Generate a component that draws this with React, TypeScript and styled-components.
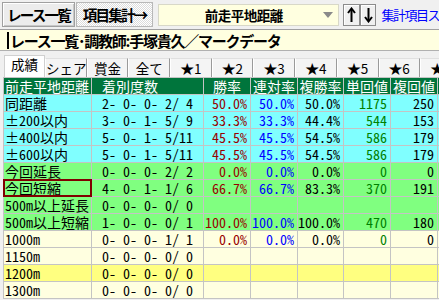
import React from "react";
import styled, { createGlobalStyle, css } from "styled-components";

const GlobalStyle = createGlobalStyle`
  html, body { margin: 0; padding: 0; background: #f0f0f0; overflow: hidden; }
  body { font-family: "Noto Sans CJK JP", "Noto Sans", sans-serif; }
`;

const Window = styled.div`
  width: 439px;
  height: 300px;
  overflow: hidden;
  display: flex;
  flex-direction: column;
  background: #f0f0f0;
`;

const Toolbar = styled.div`
  display: flex;
  align-items: center;
  height: 29px;
  padding-left: 2px;
  box-sizing: border-box;
  white-space: nowrap;
  flex-shrink: 0;
`;

const NavButton = styled.div<{ $w: number; $pressed?: boolean }>`
  width: ${(p) => p.$w}px;
  height: 25px;
  box-sizing: border-box;
  border: 1px solid #a0a0a0;
  margin-right: 1px;
  display: flex;
  align-items: center;
  justify-content: center;
  font-weight: 700;
  font-size: 14.5px;
  letter-spacing: -1.8px;
  color: #000;
  ${(p) =>
    p.$pressed
      ? css`
          background: repeating-conic-gradient(#ffffff 0 25%, #dcdcdc 0 50%) 0 0 / 2px 2px;
          border-color: #b8b8b8;
        `
      : css`
          background: #ececec;
          box-shadow: inset 1px 1px 0 #ffffff, inset -1px -1px 0 #c8c8c8;
        `}
`;

const Select = styled.div`
  width: 186px;
  height: 22px;
  margin-left: 4px;
  box-sizing: border-box;
  background: #ffffe0;
  border: 1px solid #d8d8c8;
  display: flex;
  align-items: center;
`;

const SelectLabel = styled.span`
  flex: 1;
  text-align: center;
  font-weight: 700;
  font-size: 13.5px;
  letter-spacing: -0.5px;
  padding-left: 6px;
`;

const SelectArrow = styled.svg`
  width: 12px;
  height: 8px;
  margin-right: 4px;
  flex-shrink: 0;
`;

const ArrowButton = styled.div<{ $first?: boolean }>`
  width: 17px;
  height: 22px;
  margin-left: ${(p) => (p.$first ? 4 : 0)}px;
  box-sizing: border-box;
  background: #f0f0f0;
  border: 1px solid #8c8c8c;
  box-shadow: inset 1px 1px 0 #ffffff;
  display: flex;
  align-items: center;
  justify-content: center;
`;

const LinkText = styled.span`
  margin-left: 5px;
  color: #0000ff;
  font-size: 13px;
  letter-spacing: -1.5px;
`;

const TitleBar = styled.div`
  height: 22px;
  box-sizing: border-box;
  background: #ffffe0;
  border-top: 1px solid #a0a0a0;
  border-bottom: 1px solid #b0b0b0;
  display: flex;
  align-items: center;
  padding-left: 7px;
  white-space: nowrap;
  flex-shrink: 0;
`;

const Caret = styled.span`
  display: inline-block;
  width: 2px;
  height: 17px;
  background: #000;
  margin-right: 1px;
`;

const TitleText = styled.span`
  font-weight: 700;
  font-size: 15px;
  letter-spacing: -1.25px;
  color: #000;
`;

const TabBar = styled.div`
  display: flex;
  align-items: flex-end;
  height: 24px;
  margin-top: 2px;
  padding-left: 4px;
  flex-shrink: 0;
  white-space: nowrap;
`;

const Tab = styled.div<{ $active?: boolean }>`
  flex-shrink: 0;
  box-sizing: border-box;
  text-align: center;
  font-size: 13.5px;
  color: #000;
  ${(p) =>
    p.$active
      ? css`
          width: 41px;
          height: 22px;
          line-height: 17px;
          background: #ffffff;
          border: 1px solid #d0d0d0;
          border-bottom: none;
        `
      : css`
          width: 41.7px;
          height: 19px;
          line-height: 18px;
          background: #f4f4f4;
          border-top: 1px solid #e0e0e0;
          border-right: 1px solid #9a9a9a;
          border-left: 1px solid #ffffff;
        `}
`;

const Grid = styled.div`
  display: grid;
  grid-template-columns: 87px 111px 46px 46px 45px 46px 46px 46px;
  grid-auto-rows: 16px;
  gap: 1px;
  background: #c4c4c4;
  border: 1px solid #c4c4c4;
  margin-left: 3px;
  width: max-content;
  font-family: "Noto Sans Mono CJK JP", "Noto Sans CJK JP", monospace;
  font-size: 14px;
  line-height: 16px;
  flex-shrink: 0;
`;

const HeadCell = styled.div<{ $align: "left" | "center"; $pad?: number }>`
  background: #00753c;
  color: #ffffff;
  white-space: pre;
  overflow: hidden;
  text-align: ${(p) => p.$align};
  padding-left: ${(p) => p.$pad ?? 0}px;
`;

type Tone = "cyan" | "green" | "cream" | "yellow";
const toneBg: Record<Tone, string> = {
  cyan: "#80ffff",
  green: "#80ff80",
  cream: "#ffffe0",
  yellow: "#ffff80",
};

const Cell = styled.div<{ $tone: Tone; $color?: string; $align?: "left" | "right"; $pad?: number; $selected?: boolean }>`
  background: ${(p) => toneBg[p.$tone]};
  color: ${(p) => p.$color ?? "#000"};
  white-space: pre;
  overflow: hidden;
  text-align: ${(p) => p.$align ?? "right"};
  padding-left: ${(p) => (p.$align === "left" ? p.$pad ?? 1 : 0)}px;
  padding-right: ${(p) => (p.$align === "left" ? 0 : 3)}px;
  ${(p) =>
    p.$selected &&
    css`
      outline: 2px solid #800000;
      outline-offset: -1px;
      position: relative;
    `}
`;

type Row = {
  label: string;
  counts: string;
  win?: string;
  ren?: string;
  fuku?: string;
  tan?: string;
  fkv?: string;
  tone: Tone;
  selected?: boolean;
};

const rows: Row[] = [
  { label: "同距離", counts: "2- 0- 0- 2/ 4", win: "50.0%", ren: "50.0%", fuku: "50.0%", tan: "1175", fkv: "250", tone: "cyan" },
  { label: "±200以内", counts: "3- 0- 1- 5/ 9", win: "33.3%", ren: "33.3%", fuku: "44.4%", tan: "544", fkv: "153", tone: "cyan" },
  { label: "±400以内", counts: "5- 0- 1- 5/11", win: "45.5%", ren: "45.5%", fuku: "54.5%", tan: "586", fkv: "179", tone: "cyan" },
  { label: "±600以内", counts: "5- 0- 1- 5/11", win: "45.5%", ren: "45.5%", fuku: "54.5%", tan: "586", fkv: "179", tone: "cyan" },
  { label: "今回延長", counts: "0- 0- 0- 2/ 2", win: "0.0%", ren: "0.0%", fuku: "0.0%", tan: "0", fkv: "0", tone: "green" },
  { label: "今回短縮", counts: "4- 0- 1- 1/ 6", win: "66.7%", ren: "66.7%", fuku: "83.3%", tan: "370", fkv: "191", tone: "green", selected: true },
  { label: "500m以上延長", counts: "0- 0- 0- 0/ 0", tone: "green" },
  { label: "500m以上短縮", counts: "1- 0- 0- 0/ 1", win: "100.0%", ren: "100.0%", fuku: "100.0%", tan: "470", fkv: "180", tone: "green" },
  { label: "1000m", counts: "0- 0- 0- 1/ 1", win: "0.0%", ren: "0.0%", fuku: "0.0%", tan: "0", fkv: "0", tone: "cream" },
  { label: "1150m", counts: "0- 0- 0- 0/ 0", tone: "cream" },
  { label: "1200m", counts: "0- 0- 0- 0/ 0", tone: "yellow" },
  { label: "1300m", counts: "0- 0- 0- 0/ 0", tone: "cream" },
];

const tabs = ["成績", "シェア", "賞金", "全て", "★1", "★2", "★3", "★4", "★5", "★6", "★7"];

const headers = ["勝率", "連対率", "複勝率", "単回値", "複回値", ""];

const UpArrow = () => (
  <svg width="9" height="16" viewBox="0 0 9 16">
    <path d="M4.5 15V2" stroke="#000" strokeWidth="2" />
    <path d="M1 6L4.5 1.5L8 6" stroke="#000" strokeWidth="2" fill="none" />
  </svg>
);

const DownArrow = () => (
  <svg width="9" height="16" viewBox="0 0 9 16">
    <path d="M4.5 1V14" stroke="#000" strokeWidth="2" />
    <path d="M1 10L4.5 14.5L8 10" stroke="#000" strokeWidth="2" fill="none" />
  </svg>
);

export default function App() {
  return (
    <>
      <GlobalStyle />
      <Window>
        <Toolbar>
          <NavButton $w={75}>レース一覧</NavButton>
          <NavButton $w={79} $pressed>
            項目集計→
          </NavButton>
          <Select>
            <SelectLabel>前走平地距離</SelectLabel>
            <SelectArrow viewBox="0 0 12 8">
              <path d="M1 1H11L6 7Z" fill="#8a8a8a" />
            </SelectArrow>
          </Select>
          <ArrowButton $first>
            <UpArrow />
          </ArrowButton>
          <ArrowButton>
            <DownArrow />
          </ArrowButton>
          <LinkText>集計項目ス</LinkText>
        </Toolbar>
        <TitleBar>
          <Caret />
          <TitleText>レース一覧･調教師:手塚貴久／マークデータ</TitleText>
        </TitleBar>
        <TabBar>
          {tabs.map((t, i) => (
            <Tab key={t} $active={i === 0}>
              {t}
            </Tab>
          ))}
        </TabBar>
        <Grid>
          <HeadCell $align="left" $pad={1}>
            前走平地距離
          </HeadCell>
          <HeadCell $align="left" $pad={10}>
            着別度数
          </HeadCell>
          {headers.map((h, i) => (
            <HeadCell key={i} $align="center">
              {h}
            </HeadCell>
          ))}
          {rows.map((r) => (
            <React.Fragment key={r.label}>
              <Cell $tone={r.tone} $align="left" $pad={1} $selected={r.selected}>
                {r.label}
              </Cell>
              <Cell $tone={r.tone} $align="left" $pad={10}>
                {r.counts}
              </Cell>
              <Cell $tone={r.tone} $color="#990000">{r.win ?? ""}</Cell>
              <Cell $tone={r.tone} $color="#0000ff">{r.ren ?? ""}</Cell>
              <Cell $tone={r.tone}>{r.fuku ?? ""}</Cell>
              <Cell $tone={r.tone} $color="#008000">{r.tan ?? ""}</Cell>
              <Cell $tone={r.tone}>{r.fkv ?? ""}</Cell>
              <Cell $tone={r.tone} />
            </React.Fragment>
          ))}
        </Grid>
      </Window>
    </>
  );
}
